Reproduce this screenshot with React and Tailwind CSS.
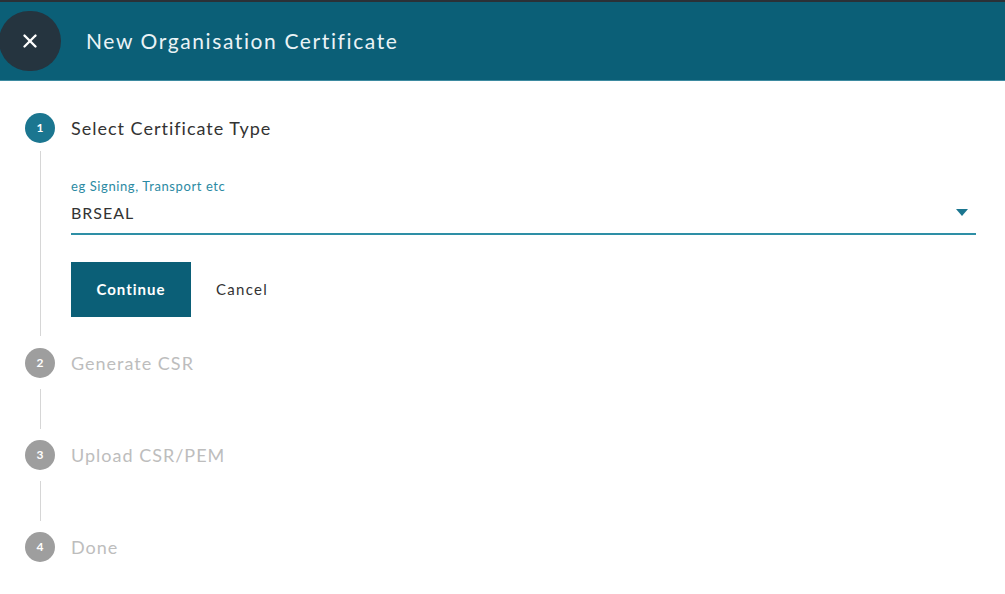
import { X } from 'lucide-react'

const font = { fontFamily: 'Lato, "Open Sans", "Noto Sans", sans-serif' }

function StepDot({ n, active }) {
  return (
    <div
      className={`flex h-[30px] w-[30px] shrink-0 items-center justify-center rounded-full text-[12px] font-bold text-white ${
        active ? 'bg-[#1b7690]' : 'bg-[#9e9e9e]'
      }`}
    >
      {n}
    </div>
  )
}

function Connector({ h }) {
  return (
    <div className="flex w-[30px] shrink-0 justify-center">
      <div className={`w-px bg-[#d6d6d6] ${h}`} />
    </div>
  )
}

function PendingStep({ n, label, last }) {
  return (
    <div className="flex flex-col">
      <div className="flex items-center gap-4">
        <StepDot n={n} />
        <span className="text-[18px] tracking-[1px] text-[#bdbdbd]">{label}</span>
      </div>
      {!last && (
        <div className="flex py-[11px]">
          <Connector h="h-[40px]" />
        </div>
      )}
    </div>
  )
}

export default function App() {
  return (
    <div className="h-[594px] w-[1005px] overflow-hidden bg-white" style={font}>
      <div className="h-[2px] bg-[#2b3137]" />
      <header className="flex h-[79px] items-center border-b border-[#3d8aa0] bg-[#0b5f77]">
        <button
          type="button"
          className="-ml-px flex h-[60px] w-[62px] items-center justify-center rounded-full bg-[#25343f] text-white"
        >
          <X size={22} strokeWidth={2.6} />
        </button>
        <h1 className="ml-[25px] text-[21px] tracking-[1.6px] text-[#eaf3f6]">New Organisation Certificate</h1>
      </header>

      <div className="pl-[25px] pr-[29px] pt-[32px]">
        <div className="flex items-center gap-4">
          <StepDot n="1" active />
          <span className="text-[18px] tracking-[1px] text-[#333]">Select Certificate Type</span>
        </div>

        <div className="flex">
          <div className="flex w-[30px] shrink-0 justify-center pt-[8px]">
            <div className="h-[185px] w-px bg-[#d6d6d6]" />
          </div>
          <div className="ml-4 flex-1 pt-[34px]">
            <div className="text-[13px] tracking-[0.6px] text-[#2b8aa3]">eg Signing, Transport etc</div>
            <div className="flex items-center justify-between border-b-2 border-[#2e8fa6] pb-[8px] pt-[4px]">
              <span className="text-[16px] tracking-[1px] text-[#333]">BRSEAL</span>
              <svg width="12" height="7" viewBox="0 0 12 7" className="mr-[8px]">
                <path d="M0 0h12L6 7z" fill="#1b7690" />
              </svg>
            </div>
            <div className="mt-[27px] flex items-center gap-[25px]">
              <button
                type="button"
                className="h-[55px] w-[120px] bg-[#0b5f77] text-[15px] font-bold tracking-[1px] text-white"
              >
                Continue
              </button>
              <span className="text-[15px] tracking-[1.3px] text-[#333]">Cancel</span>
            </div>
          </div>
        </div>

        <div className="pt-[12px]">
          <PendingStep n="2" label="Generate CSR" />
          <PendingStep n="3" label="Upload CSR/PEM" />
          <PendingStep n="4" label="Done" last />
        </div>
      </div>
    </div>
  )
}
